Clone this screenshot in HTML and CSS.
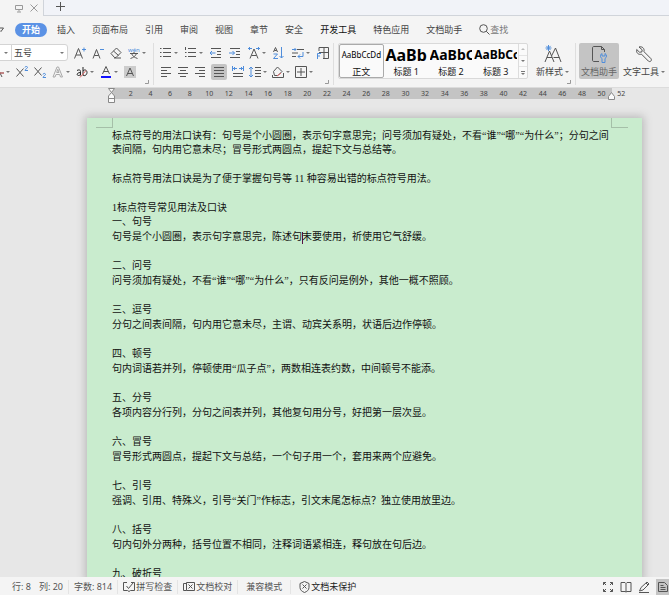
FILE: index.html
```html
<!DOCTYPE html>
<html lang="zh-CN">

<head>
    <meta charset="UTF-8">
    <meta name="viewport" content="width=device-width, initial-scale=1.0">
    <title>标点符号的用法口诀</title>
    <link rel="stylesheet" href="styles.css">
</head>

<body>
    <!-- Document tabs -->
    <header class="tab-bar">
        <div class="doc-tab">
            <svg width="9" height="9" viewBox="0 0 9 9"><path d="M.5 1.5h7v4h-7zM4 5.5v2M2 8h4" /></svg>
            <button class="icon-button" aria-label="关闭"><svg width="8" height="8" viewBox="0 0 8 8"><path d="M.5.5l7 7M7.5.5l-7 7" /></svg></button>
        </div>
        <button class="icon-button new-tab" aria-label="新建"><svg width="9" height="9" viewBox="0 0 9 9"><path d="M4.5 0v9M0 4.5h9" /></svg></button>
    </header>

    <!-- Menu -->
    <nav class="menu">
        <svg class="menu-more" width="4" height="6" viewBox="0 0 4 6"><path d="M0 1h3.500L1 4.500L0 3.500" /></svg>
        <a href="#" class="current">开始</a>
        <a href="#">插入</a>
        <a href="#">页面布局</a>
        <a href="#">引用</a>
        <a href="#">审阅</a>
        <a href="#">视图</a>
        <a href="#">章节</a>
        <a href="#">安全</a>
        <a href="#" class="strong">开发工具</a>
        <a href="#">特色应用</a>
        <a href="#">文档助手</a>
        <a href="#" class="search"><svg width="11" height="11" viewBox="0 0 11 11"><circle cx="4.500" cy="4.500" r="3.800" /><path d="M7.300 7.300l3.200 3.200" /></svg>查找</a>
    </nav>

    <!-- Ribbon -->
    <section class="ribbon">
        <div class="group font-group">
            <div class="tools">
                <div class="combo font-name"><select aria-label="字体"><option></option></select></div>
                <div class="combo font-size"><select aria-label="字号"><option>五号</option></select></div>
                <button class="tool" aria-label="增大字号"><svg viewBox="0 0 12 12"><path d="M.5 11.500L4.500 1.500L8.500 11.500M2 8h5" /><path class="blue" d="M10 .5v4M8 2.500h4" /></svg></button>
                <button class="tool" aria-label="减小字号"><svg viewBox="0 0 12 12"><path d="M1 11.500L4.500 2.500L8 11.500M2.300 8.500h4.400" /><path class="blue" d="M8 2.500h4" /></svg></button>
                <button class="tool" aria-label="清除格式"><svg viewBox="0 0 12 12"><path d="M1 6.500L6.500 1L11 5.500L6 10.500H4.500zM3.500 4L8.500 8.500M4 11h7" /></svg></button>
                <button class="tool drop" aria-label="拼音指南"><svg viewBox="0 0 12 12"><text x="0" y="5">wén</text><path d="M2 6.500h8M6 5v1.500M3.500 6.500c1 2.500 3 4 6 5M8.500 6.500c-1 2.500-3 4-6 5" /></svg></button>
            </div>
            <div class="tools">
                <button class="tool drop cut" aria-label="删除线"><svg viewBox="8 0 4 12"><path d="M5 1l5 10M0 7h12" /><path class="red" d="M0 7h12" /></svg></button>
                <button class="tool" aria-label="上标"><svg viewBox="0 0 12 12"><path d="M.5 2.500l7 8M7.500 2.500l-7 8" /><path class="blue" d="M9 1.500c0-1.500 2.500-1.500 2.500 0c0 1-2.500 1.500-2.500 3h3" /></svg></button>
                <button class="tool" aria-label="下标"><svg viewBox="0 0 12 12"><path d="M.5 1.500l7 8M7.500 1.500l-7 8" /><path class="blue" d="M9 8.500c0-1.500 2.500-1.500 2.500 0c0 1-2.500 1.500-2.500 3h3" /></svg></button>
                <button class="tool drop" aria-label="文字效果"><svg viewBox="0 0 12 12"><path class="faint" d="M1 11L5 1h1.500L10.500 11H8.500L7.700 8.500H4L3 11zM4.700 6.500h2.300L5.800 3.200z" /></svg></button>
                <button class="tool drop" aria-label="突出显示"><svg viewBox="0 0 12 12"><path class="dark" d="M1 4.500c3-1.500 3.500 0 3.500 1.500v3.500M4.500 6.500c-4 0-4 3-2 3s2-1.500 2-1.500M7 1v8.500M7 5c1.500-2 4-1 4 1.500s-2.500 4-4 2.500" /><path class="red" d="M4 11.500l6-7" /></svg></button>
                <button class="tool drop" aria-label="字体颜色"><svg viewBox="0 0 12 12"><path d="M2.500 8L6 .5L9.500 8M3.700 5.500h4.600" /><path class="text-color" d="M1 11h10" /></svg></button>
                <button class="tool" aria-label="字符底纹"><svg viewBox="0 0 12 12"><path class="shade" d="M0 0h12v12H0z" /><path d="M2.500 10L6 2L9.500 10M3.700 7.500h4.600" /></svg></button>
            </div>
            <svg class="launcher" viewBox="0 0 4 4"><path d="M3.500 0v3.500H0" /></svg>
        </div>

        <div class="group paragraph-group">
            <div class="tools wide">
                <button class="tool drop" aria-label="项目符号"><svg viewBox="0 0 12 12"><path d="M3 1.500h8M3 5.500h8M3 9.500h8M0 1.500h1.500M0 5.500h1.500M0 9.500h1.500" /></svg></button>
                <button class="tool drop" aria-label="编号"><svg viewBox="0 0 12 12"><path d="M3 1.500h8M3 5.500h8M3 9.500h8M.5 0v3M0 5.500h1.500M0 9.500h1.500" /></svg></button>
                <button class="tool" aria-label="减少缩进"><svg viewBox="0 0 12 12"><path d="M1 1.500h10M7 4.500h4M7 7.500h4M1 10.500h10" /><path class="blue" d="M0 6h5.500M2 4L0 6l2 2" /></svg></button>
                <button class="tool" aria-label="增加缩进"><svg viewBox="0 0 12 12"><path d="M1 1.500h10M7 4.500h4M7 7.500h4M1 10.500h10" /><path class="blue" d="M0 6h5.500M3.500 4l2 2l-2 2" /></svg></button>
                <button class="tool drop" aria-label="中文版式"><svg viewBox="0 0 12 12"><path d="M2 11.500L6 2L10 11.500M3.500 8.500h5" /><path class="blue" d="M0 1.500h4M2 0L.5 1.500L2 3M8 1.500h4M10 0l1.500 1.500L10 3" /></svg></button>
                <button class="tool" aria-label="排序"><svg viewBox="0 0 12 12"><path d="M.5 5L2.500 .5L4.500 5M1.300 3.500h2.400" /><path class="blue" d="M.5 7h4l-4 4.500h4.500M8.500 0v11M6.500 9l2 2l2-2" /></svg></button>
                <button class="tool drop" aria-label="显示编辑标记"><svg viewBox="0 0 12 12"><path d="M5 2.500h7M0 6h6M0 9.500h4" /><path class="blue" d="M0 2.500h4M2.500 1L4 2.500L2.500 4M11 5v4.500H6M8 7.500l-2 2l2 2" /></svg></button>
                <button class="tool" aria-label="制表位"><svg viewBox="0 0 12 12"><path d="M2 4V.5h9.500v11H6M7 .5v11M2 5.500h9.500" /><path class="blue" d="M.5 12V6.500H4M.5 9H3" /></svg></button>
            </div>
            <div class="tools">
                <button class="tool" aria-label="左对齐"><svg viewBox="0 0 12 12"><path d="M1 1.500h10M1 4.500h6M1 7.500h10M1 10.500h6" /></svg></button>
                <button class="tool" aria-label="居中"><svg viewBox="0 0 12 12"><path d="M1 1.500h10M3 4.500h6M1 7.500h10M3 10.500h6" /></svg></button>
                <button class="tool" aria-label="右对齐"><svg viewBox="0 0 12 12"><path d="M1 1.500h10M5 4.500h6M1 7.500h10M5 10.500h6" /></svg></button>
                <button class="tool active" aria-label="两端对齐"><svg viewBox="0 0 12 12"><path d="M1 1.500h10M1 4.500h10M1 7.500h10M1 10.500h10" /></svg></button>
                <button class="tool" aria-label="分散对齐"><svg viewBox="0 0 12 12"><path d="M1 7.500h10M1 10.500h10" /><path class="blue" d="M.5 0v5M11.500 0v5M1 2.500h4M3 1L1.500 2.500L3 4M7 2.500h4M9 1l1.500 1.500L9 4" /></svg></button>
                <button class="tool drop" aria-label="行距"><svg viewBox="0 0 12 12"><path d="M6 1.500h6M6 4.500h6M6 7.500h6M6 10.500h6" /><path class="blue" d="M2 1v10M0 3l2-2l2 2M0 9l2 2l2-2" /></svg></button>
                <button class="tool drop" aria-label="底纹颜色"><svg viewBox="0 0 12 12"><path d="M1.500 5.500L5.500 1l4.500 4.500L6 9.500H2.500zM.5 9v2.500h11V7" /><path class="red" d="M5 10l4-3" /></svg></button>
                <button class="tool drop" aria-label="边框"><svg viewBox="0 0 12 12"><path d="M.5 .5h11v11H.5zM6 2v8M2 6h8" /></svg></button>
            </div>
            <svg class="launcher" viewBox="0 0 4 4"><path d="M3.500 0v3.500H0" /></svg>
        </div>

        <div class="group styles-group">
            <div class="gallery">
                <button class="style-item selected"><span class="sample body-text">AaBbCcDd</span>正文</button>
                <button class="style-item"><span class="sample heading-1">AaBb</span>标题 1</button>
                <button class="style-item"><span class="sample heading-2">AaBbC</span>标题 2</button>
                <button class="style-item"><span class="sample heading-3">AaBbCc</span>标题 3</button>
                <div class="gallery-scroll">
                    <button class="up" aria-label="上一行"></button>
                    <button aria-label="下一行"></button>
                    <button class="more" aria-label="更多"></button>
                </div>
            </div>
            <button class="big-tool">
                <svg width="18" height="18" viewBox="0 0 18 18"><path d="M1 17L5.500 6L10 17M3 12.500h5M7.500 11L11.500 3L17 17M9.500 12.500h6" /><path class="blue" d="M4.500 0v6M1.500 3h6M2.400 .9l4.200 4.200M6.600 .9L2.400 5.100" /></svg>
                <span class="drop">新样式</span>
            </button>
            <svg class="launcher" viewBox="0 0 4 4"><path d="M3.500 0v3.500H0" /></svg>
        </div>

        <div class="group helper-group">
            <button class="big-tool active">
                <svg width="18" height="18" viewBox="0 0 18 18"><path d="M9 16.500H4c-1 0-1.500-.5-1.500-1.500V3c0-1 .5-1.500 1.500-1.500h7.500l3 3V7M11.500 1.500v3h3" /><path class="blue" d="M12 8.500c-2 1-2 4 0 5v4h3v-4c2-1 2-4 0-5v2.500h-3z" /></svg>
                <span>文档助手</span>
            </button>
            <button class="big-tool">
                <svg width="18" height="18" viewBox="0 0 18 18"><path d="M4 2l3.200 2.800-.4 2.200-2.300.2L1.700 4.500C1 8 3.500 10 6.500 9.200l7 7c1.800 1.200 3.700-.7 2.500-2.500L9 6.700C9.700 3.500 7.300 1 4 2z" /></svg>
                <span class="drop">文字工具</span>
            </button>
        </div>
    </section>

    <!-- Ruler -->
    <div class="ruler">
        <svg class="indent-marker left" width="7" height="15" viewBox="0 0 7 15"><path d="M.5 .5h6L3.500 4.500zM3.500 4.500L6.500 8v6.500h-6V8zM.5 10.500h6" /></svg>
        <ol class="ruler-scale">
            <li>2</li><li>4</li><li>6</li><li>8</li><li>10</li><li>12</li><li>14</li><li>16</li><li>18</li>
            <li>20</li><li>22</li><li>24</li><li>26</li><li>28</li><li>30</li><li>32</li><li>34</li><li>36</li>
            <li>38</li><li>40</li><li>42</li><li>44</li><li>46</li><li>48</li><li>50</li><li>52</li>
        </ol>
        <svg class="indent-marker right" width="7" height="8" viewBox="0 0 7 8"><path d="M3.500 .5L6.500 4.500v3h-6v-3z" /></svg>
    </div>

    <!-- Document -->
    <main class="canvas">
        <article class="page">
            <div class="crop-marks"><span class="mark-left"></span><span class="mark-right"></span></div>
            <div class="content">
                <p class="intro">标点符号的用法口诀有：句号是个小圆圈，表示句字意思完；问号须加有疑处，不看“谁”“哪”“为什么”；分句之间表间隔，句内用它意未尽；冒号形式两圆点，提起下文与总结等。</p>
                <p class="intro">标点符号用法口诀是为了便于掌握句号等 11 种容易出错的标点符号用法。</p>
                <h1>1标点符号常见用法及口诀</h1>
                <h2>一、句号</h2>
                <p>句号是个小圆圈，表示句字意思完，陈述句<span class="text-cursor"></span>末要使用，祈使用它气舒缓。</p>
                <h2>二、问号</h2>
                <p>问号须加有疑处，不看“谁”“哪”“为什么”，只有反问是例外，其他一概不照顾。</p>
                <h2>三、逗号</h2>
                <p>分句之间表间隔，句内用它意未尽，主谓、动宾关系明，状语后边作停顿。</p>
                <h2>四、顿号</h2>
                <p>句内词语若并列，停顿使用“瓜子点”，两数相连表约数，中间顿号不能添。</p>
                <h2>五、分号</h2>
                <p>各项内容分行列，分句之间表并列，其他复句用分号，好把第一层次显。</p>
                <h2>六、冒号</h2>
                <p>冒号形式两圆点，提起下文与总结，一个句子用一个，套用来两个应避免。</p>
                <h2>七、引号</h2>
                <p>强调、引用、特殊义，引号“关门”作标志，引文末尾怎标点？独立使用放里边。</p>
                <h2>八、括号</h2>
                <p>句内句外分两种，括号位置不相同，注释词语紧相连，释句放在句后边。</p>
                <h2>九、破折号</h2>
            </div>
        </article>
    </main>

    <!-- Status bar -->
    <footer class="status-bar">
        <span class="status-item position"><span>行: 8</span><span>列: 20</span></span>
        <span class="status-item">字数: 814</span>
        <button class="status-item"><svg width="12" height="10" viewBox="0 0 12 10"><path d="M4 .5H.5v8h4l1.500 1l1.500-1h4v-8H8M3.500 4l2 2.500L10 1" /></svg>拼写检查</button>
        <button class="status-item"><svg width="12" height="10" viewBox="0 0 12 10"><path d="M3 1.500H.5v7h3M3.500 .5h8v8h-8zM5.500 2.500l4 4M9.500 2.500l-4 4" /></svg>文档校对</button>
        <span class="status-item mode">兼容模式</span>
        <button class="status-item protect"><svg width="11" height="12" viewBox="0 0 11 12"><path d="M5.500 .5l4.500 2v4c0 2.500-2 4-4.500 5C3 10.500 1 9 1 6.500v-4zM3.500 3.500l4 4M7.500 3.500l-4 4" /></svg>文档未保护</button>
        <div class="view-buttons">
            <button class="icon-button" aria-label="全屏显示"><svg width="12" height="12" viewBox="0 0 12 12"><path d="M4 1.500H1.500V4M8 1.500h2.500V4M4 10.500H1.500V8M8 10.500h2.500V8M1.500 1.500L4 4M10.500 1.500L8 4M1.500 10.500L4 8M10.500 10.500L8 8" /></svg></button>
            <button class="icon-button" aria-label="阅读版式"><svg width="12" height="12" viewBox="0 0 12 12"><path d="M6 2.500L5 1.500H1v9h4l1 .5l1-.5h4v-9H7L6 2.500V11" /></svg></button>
            <button class="icon-button" aria-label="写作模式"><svg width="12" height="12" viewBox="0 0 12 12"><path d="M1.500 10L3 6.500L9 1l2 2l-6 6zM8 2l2 2M1 11.500h10" /></svg></button>
            <button class="icon-button page-view" aria-label="页面视图"><svg width="10" height="12" viewBox="0 0 10 12"><path d="M.5 1.500h6l3 3v6h-9zM2.500 4.500h3M2.500 6.500h5M2.500 8.500h5" /></svg></button>
        </div>
    </footer>
</body>

</html>
```
FILE: styles.css
```css
* {
    box-sizing: border-box;
}

body {
    font-family: "Noto Sans", "Noto Sans CJK SC", sans-serif;
    font-size: 9px;
    line-height: 12px;
    color: #444;
    margin: 0;
    height: 100vh;
    display: flex;
    flex-direction: column;
    overflow: hidden;
    background-color: #f4f4f4;
}

button,
select {
    font: inherit;
    color: inherit;
    background: none;
    border: none;
    border-radius: 0;
    margin: 0;
    padding: 0;
}

a {
    color: inherit;
    text-decoration: none;
}

svg {
    display: block;
    flex-shrink: 0;
    fill: none;
    stroke: #555;
}

.blue {
    stroke: #4f8ddb;
}

.red {
    stroke: #d66;
}

.faint {
    stroke: #aaa;
}

.dark {
    stroke: #222;
}

/* Tabs */
.tab-bar {
    display: flex;
    height: 16px;
    flex-shrink: 0;
    background-color: #f1f3f8;
    border-bottom: 1px solid #d0d4da;
}

.doc-tab {
    display: flex;
    align-items: center;
    gap: 6px;
    width: 44px;
    height: 16px;
    padding-left: 15px;
    background-color: #f4f4f4;
    border-right: 1px solid #d0d4da;
}

.doc-tab svg {
    stroke: #999;
}

.icon-button {
    display: flex;
    align-items: center;
    justify-content: center;
}

.new-tab {
    margin-left: 12px;
    height: 12px;
}

/* Menu */
.menu {
    display: flex;
    align-items: center;
    gap: 17px;
    height: 27px;
    flex-shrink: 0;
    white-space: nowrap;
}

.menu-more {
    margin-right: -6px;
}

.menu .current {
    padding: 1px 7px;
    margin-right: -7px;
    border-radius: 8px;
    color: white;
    font-weight: bold;
    background-color: #5b92e5;
}

.menu .strong {
    color: #111;
}

.menu .search {
    display: flex;
    align-items: center;
    color: #777;
}

/* Ribbon */
.ribbon {
    display: flex;
    height: 45px;
    flex-shrink: 0;
    border-bottom: 1px solid #dcdcdc;
}

.group {
    position: relative;
    flex-shrink: 0;
    height: 42px;
    border-right: 1px solid #dedede;
}

.font-group {
    width: 154px;
}

.paragraph-group {
    width: 180px;
    padding-left: 6px;
}

.tools {
    display: flex;
    align-items: center;
    gap: 6px;
    height: 19px;
}

.paragraph-group .tools {
    gap: 5px;
}

.paragraph-group .wide {
    gap: 7px;
}

.tool {
    display: flex;
    align-items: center;
    flex-shrink: 0;
}

.tool svg {
    width: 12px;
    height: 12px;
}

.tool text {
    font-size: 6px;
    fill: #4f8ddb;
    stroke: none;
}

.cut svg {
    width: 4px;
}

.tool .text-color {
    stroke: #11f;
    stroke-width: 2px;
}

.tool .shade {
    fill: #ccc;
    stroke: none;
}

.active {
    background-color: #c4c4c4;
    border-radius: 2px;
}

.tool.active {
    padding: 2px;
}

.drop {
    display: flex;
    align-items: center;
}

.drop::after,
.combo::after {
    content: "";
    margin-left: 2px;
    border: 2px solid transparent;
    border-top-color: #777;
    border-bottom-width: 0;
}

.combo {
    display: flex;
    align-items: center;
    height: 17px;
    padding-right: 3px;
    background-color: white;
    border: 1px solid #d4d4d4;
}

.combo select {
    appearance: none;
    flex: 1;
    min-width: 0;
    outline: none;
}

.font-name {
    width: 12px;
    border-left: none;
    margin-right: -7px;
}

.font-size {
    width: 57px;
    padding-left: 2px;
    border-radius: 0 3px 3px 0;
}

.launcher {
    position: absolute;
    right: 4px;
    bottom: 1px;
    width: 4px;
    height: 4px;
    stroke: #999;
}

/* Style gallery */
.styles-group {
    display: flex;
    width: 242px;
    padding-left: 4px;
    gap: 8px;
}

.gallery {
    display: flex;
    width: 190px;
    height: 36px;
    background-color: #fafafa;
    border: 1px solid #d9d9d9;
    border-radius: 2px;
    color: #111;
}

.style-item {
    flex: 1;
    min-width: 0;
    overflow: hidden;
    display: flex;
    flex-direction: column;
    align-items: center;
    white-space: nowrap;
}

.selected {
    outline: 1px solid #aaa;
    outline-offset: -1px;
    border-radius: 2px;
}

.sample {
    align-self: stretch;
    height: 22px;
    margin: 0 1px;
    line-height: 22px;
    overflow: hidden;
    font-weight: bold;
    color: black;
}

.body-text {
    font-size: 8px;
    font-weight: normal;
}

.heading-1 {
    font-size: 16px;
}

.heading-2 {
    font-size: 14px;
}

.heading-3 {
    font-size: 12px;
}

.gallery-scroll {
    display: flex;
    flex-direction: column;
    width: 9px;
    border-left: 1px solid #ddd;
}

.gallery-scroll button {
    flex: 1;
    display: flex;
    align-items: center;
    justify-content: center;
    border-bottom: 1px solid #e4e4e4;
}

.gallery-scroll button::after {
    content: "";
    border: 2px solid transparent;
    border-top-color: #777;
    border-bottom-width: 0;
}

.gallery-scroll .up::after {
    border-width: 0 2px 2px;
    border-bottom-color: #bbb;
}

.gallery-scroll .more {
    flex-direction: column;
    gap: 1px;
    border-bottom: none;
}

.gallery-scroll .more::before {
    content: "";
    width: 4px;
    height: 1px;
    background-color: #777;
}

.big-tool {
    display: flex;
    flex-direction: column;
    align-items: center;
    gap: 3px;
    height: 36px;
    padding: 2px;
    white-space: nowrap;
}

.styles-group .big-tool {
    padding: 2px 0;
}

.helper-group {
    display: flex;
    gap: 2px;
    padding-left: 3px;
    border-right: none;
}

.helper-group .active {
    color: #666;
}

/* Ruler */
.ruler {
    position: relative;
    height: 11px;
    flex-shrink: 0;
    padding: 0 57px 0 112px;
    background: linear-gradient(#c4c4c4, #c4c4c4) content-box, #e7e7e7;
}

.ruler-scale {
    display: grid;
    grid-template-columns: repeat(26, 1fr);
    height: 11px;
    margin: 0 -19px 0 9px;
    padding: 0;
    list-style: none;
    font-size: 7px;
    line-height: 11px;
    text-align: center;
}

.indent-marker {
    position: absolute;
    fill: #fafafa;
    stroke: #888;
    z-index: 1;
}

.indent-marker.left {
    left: 108px;
    top: 0;
}

.indent-marker.right {
    right: 54px;
    top: 4px;
}

/* Document */
.canvas {
    flex: 1;
    min-height: 0;
    overflow: hidden;
    padding: 19px 27px 0 87px;
    background-color: #e7e7e7;
}

.page {
    min-height: 100%;
    background-color: #c9ecce;
    box-shadow: 0 0 8px 2px #bbb;
}

.crop-marks {
    display: flex;
    justify-content: space-between;
    padding: 0 14px 0 9px;
}

.crop-marks span {
    width: 17px;
    height: 10px;
    border-bottom: 1px solid #a5bfa8;
}

.crop-marks .mark-left {
    border-right: 1px solid #a5bfa8;
}

.crop-marks .mark-right {
    border-left: 1px solid #a5bfa8;
}

.content {
    padding: 1px 30px 0 25px;
    font-family: "Liberation Serif", "Noto Sans CJK SC", serif;
    font-size: 10px;
    color: #111;
}

.content p {
    margin: 0 0 15px;
    line-height: 15px;
}

.content .intro {
    line-height: 14px;
}

.content h1,
.content h2 {
    margin: 0;
    font-size: 10px;
    font-weight: normal;
    line-height: 14px;
}

.text-cursor {
    display: inline-block;
    width: 1px;
    height: 12px;
    margin-right: -1px;
    vertical-align: middle;
    background-color: #514;
}

/* Status bar */
.status-bar {
    display: flex;
    align-items: center;
    height: 18px;
    flex-shrink: 0;
    padding-top: 2px;
    white-space: nowrap;
    color: #555;
}

.status-item {
    display: flex;
    align-items: center;
    gap: 1px;
    height: 14px;
    padding: 0 5px;
    border-right: 1px solid #e4e4e4;
}

.position {
    gap: 8px;
    padding-left: 12px;
}

.mode {
    padding: 0 8px;
}

.protect {
    padding-left: 8px;
    border-right: none;
    color: #222;
}

.view-buttons {
    display: flex;
    gap: 6px;
    margin-left: auto;
}

.page-view {
    width: 13px;
    height: 16px;
    background-color: #c4c4c4;
}
```
